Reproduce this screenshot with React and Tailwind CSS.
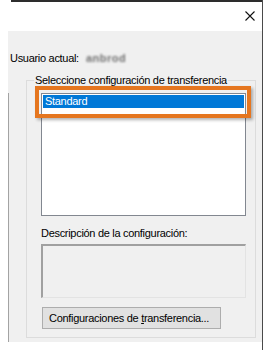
export default function App() {
    const font = { fontFamily: '"Liberation Sans", Arial, sans-serif' };

    return (
        <div className="w-[265px] h-[354px] bg-white overflow-hidden text-[11px] tracking-[-0.3px] text-black" style={font}>
            <div className="w-[263px] h-[350px] border-r border-[#4a4a4a]">
                {/* title bar */}
                <div className="h-[2px] ml-[11px] bg-[#2d2d2d]" />
                <div className="h-[29px] flex items-center justify-end pr-[7px]">
                    <svg width="10" height="10" viewBox="0 0 10 10" className="mt-[-2px]">
                        <path d="M0.5 0.5 L9.5 9.5 M9.5 0.5 L0.5 9.5" stroke="#111" strokeWidth="1.1" />
                    </svg>
                </div>

                {/* dialog body */}
                <div className="ml-[8px] h-[311px] bg-[#f0f0f0] flex">
                    <div className="w-px mt-[62px] bg-[#a3a3a3]" />
                    <div className="flex-1">
                        <div className="mt-[19px] ml-[1px] h-[16px] leading-[16px] flex items-center whitespace-nowrap">
                            <span>Usuario actual:</span>
                            <span className="ml-[7px] text-[#707070] font-bold tracking-[0.5px] blur-[1.2px]">anbrod</span>
                        </div>

                        <fieldset className="relative mt-[6px] ml-[17px] w-[230px] h-[266px] border border-[#dcdcdc]">
                            <legend className="ml-[7px] px-[1px] leading-[16px] h-[16px] whitespace-nowrap">
                                Seleccione configuración de transferencia
                            </legend>

                            <div className="mt-[5px] ml-[14px] w-[205px] h-[123px] bg-white border border-[#828790] p-px">
                                <div className="h-[13px] bg-[#0078d7] text-white leading-[13px] pl-[2px]">Standard</div>
                            </div>

                            <div className="mt-[9px] ml-[14px] leading-[16px] whitespace-nowrap">Descripción de la configuración:</div>

                            <div className="mt-[3px] ml-[14px] w-[205px] h-[54px] border-t-2 border-l-2 border-t-[#a0a0a0] border-l-[#a0a0a0] border-r border-b border-r-[#e3e3e3] border-b-[#e3e3e3] bg-[#f0f0f0]" />

                            <button className="block mt-[9px] ml-[15px] w-[179px] h-[22px] bg-[#e1e1e1] border border-[#adadad] text-left pl-[6px] leading-[18px] whitespace-nowrap">
                                Configuraciones de <span className="underline">t</span>ransferencia...
                            </button>

                            {/* orange callout around the selected row */}
                            <div className="absolute left-[8px] top-[-2px] w-[216px] h-[32px] border-4 border-[#e5761f] shadow-[2px_2px_3px_rgba(0,0,0,0.3)]" />
                        </fieldset>
                    </div>
                </div>
            </div>
        </div>
    );
}
